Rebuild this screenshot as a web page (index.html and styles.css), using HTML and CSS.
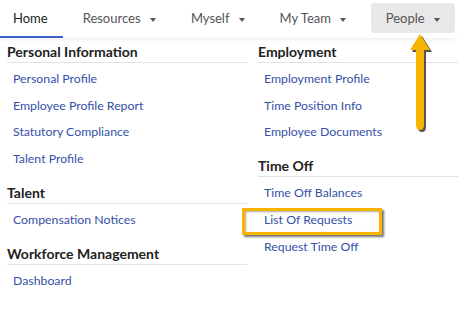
FILE: index.html
```html
<!DOCTYPE html>
<html>
    <head>
        <title>People Menu</title>
        <link rel="stylesheet" href="styles.css">
    </head>
    <body>
        <div id="nav">
            <a class="tab active">Home</a>
            <a class="tab">Resources <span class="caret"></span></a>
            <a class="tab">Myself <span class="caret"></span></a>
            <a class="tab">My Team <span class="caret"></span></a>
            <a class="tab open">People <span class="caret"></span></a>
        </div>

        <div id="menu">
            <div class="column">
                <div class="section">
                    <div class="heading">Personal Information</div>
                    <ul>
                        <li><a>Personal Profile</a></li>
                        <li><a>Employee Profile Report</a></li>
                        <li><a>Statutory Compliance</a></li>
                        <li><a>Talent Profile</a></li>
                    </ul>
                </div>
                <div class="section">
                    <div class="heading">Talent</div>
                    <ul>
                        <li><a>Compensation Notices</a></li>
                    </ul>
                </div>
                <div class="section">
                    <div class="heading">Workforce Management</div>
                    <ul>
                        <li><a>Dashboard</a></li>
                    </ul>
                </div>
            </div>
            <div class="column right">
                <div class="section">
                    <div class="heading">Employment</div>
                    <ul>
                        <li><a>Employment Profile</a></li>
                        <li><a>Time Position Info</a></li>
                        <li><a>Employee Documents</a></li>
                    </ul>
                </div>
                <div class="section">
                    <div class="heading">Time Off</div>
                    <ul>
                        <li><a>Time Off Balances</a></li>
                        <li class="marked"><a>List Of Requests</a></li>
                        <li><a>Request Time Off</a></li>
                    </ul>
                </div>
            </div>
        </div>

        <svg class="arrow" width="40" height="104" viewBox="0 0 40 104">
            <path d="M16 1 L26 17 L20 17 L20 92 Q20 97 16 97 Q12 97 12 92 L12 17 L6 17 Z" fill="#2b2b2b" opacity="0.8" transform="translate(2 2)"/>
            <path d="M16 1 L26 17 L20 17 L20 92 Q20 97 16 97 Q12 97 12 92 L12 17 L6 17 Z" fill="#f7b500"/>
        </svg>
    </body>
</html>
```

FILE: styles.css
```css
body {
    margin: 0;
    background: white;
    font-family: Lato, 'Noto Sans', sans-serif;
    position: relative;
    height: 312px;
    overflow: hidden;
}

a {
    text-decoration: none;
}

#nav {
    display: flex;
    align-items: flex-start;
    height: 38px;
    gap: 5px;
    box-shadow: 0 2px 3px rgba(0, 0, 0, 0.06);
}

.tab {
    height: 36px;
    line-height: 36px;
    padding: 0 15px;
    font-size: 13px;
    color: #555;
    border-bottom: 2px solid transparent;
    white-space: nowrap;
}

.tab.active {
    color: #222;
    border-bottom-color: #3b5fc5;
    padding: 0 15px 0 13px;
}

.tab.open {
    height: 30px;
    line-height: 30px;
    margin-top: 3px;
    border-bottom: none;
    background: #e8e8e8;
    border-radius: 3px;
    margin-left: auto;
    margin-right: 3px;
}

.caret {
    display: inline-block;
    margin-left: 6px;
    vertical-align: middle;
    border-left: 3px solid transparent;
    border-right: 3px solid transparent;
    border-top: 4px solid #555;
}

#menu {
    display: flex;
    padding: 4px 0 0 7px;
}

.column {
    width: 240px;
    display: flex;
    flex-direction: column;
    gap: 10.5px;
}

.column.right {
    margin-left: 11px;
    flex: 1;
}

.heading {
    height: 20px;
    line-height: 20px;
    font-size: 14px;
    font-weight: bold;
    color: #222;
    border-bottom: 1px solid #e6e3df;
}

ul {
    list-style: none;
    margin: 0;
    padding: 3px 0 0 0;
}

li {
    height: 26.67px;
    line-height: 26.67px;
    padding-left: 6px;
    font-size: 12.3px;
}

li a {
    color: #3450a8;
}

li.marked {
    position: relative;
}

li.marked::after {
    content: "";
    position: absolute;
    left: -16px;
    top: 1px;
    width: 134px;
    height: 21px;
    border: 3px solid #f7b500;
    box-shadow: 2px 2px 2px rgba(0, 0, 0, 0.55), inset 1px 1px 2px rgba(0, 0, 0, 0.35);
}

.arrow {
    position: absolute;
    left: 404px;
    top: 33px;
}
```
